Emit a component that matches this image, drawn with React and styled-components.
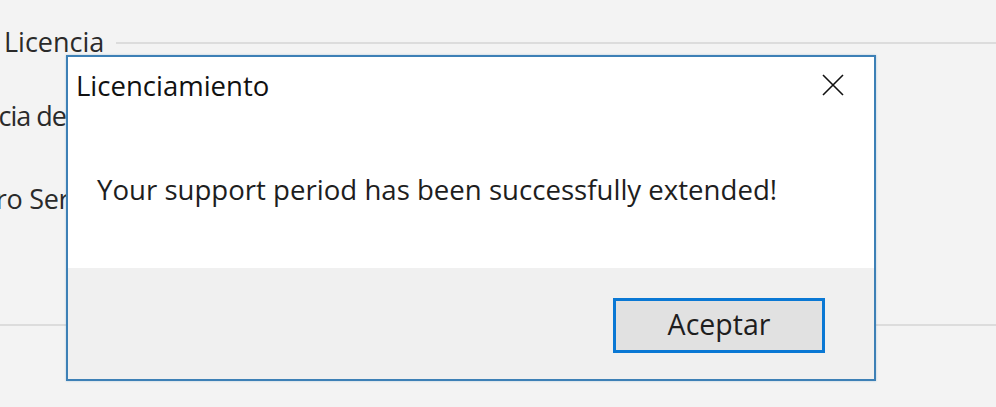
import React from "react";
import styled, { createGlobalStyle } from "styled-components";

const Global = createGlobalStyle`
  html, body { margin: 0; padding: 0; background: #f3f3f3; }
  #root { width: 996px; height: 407px; }
`;

const Page = styled.div`
  position: relative;
  width: 996px;
  height: 407px;
  overflow: hidden;
  background: #f3f3f3;
  font-family: "Open Sans", "Noto Sans", sans-serif;
  color: #2a2a2a;
`;

const Backdrop = styled.div`
  display: flex;
  flex-direction: column;
  padding-top: 25px;
`;

const GroupHeader = styled.div`
  display: flex;
  align-items: center;
  gap: 12px;
  padding-left: 4px;
  font-size: 27px;
  line-height: 34px;
`;

const GroupRule = styled.div`
  flex: 1;
  height: 2px;
  background: #dcdcdc;
  margin-top: 1px;
`;

const FieldRow = styled.div`
  font-size: 27px;
  line-height: 34px;
  white-space: nowrap;
  letter-spacing: ${(p) => p.$track}px;
  margin-left: ${(p) => p.$shift}px;
  margin-top: ${(p) => p.$gap}px;
`;

const BottomRule = styled.div`
  height: 2px;
  background: #dcdcdc;
  margin-top: 108px;
`;

const Dialog = styled.div`
  position: absolute;
  left: 66px;
  top: 55px;
  width: 806px;
  height: 322px;
  border: 2px solid #3d80b6;
  background: #ffffff;
  display: flex;
  flex-direction: column;
  box-shadow: 0 0 2px rgba(60, 128, 182, 0.35);
`;

const TitleBar = styled.div`
  display: flex;
  align-items: center;
  justify-content: space-between;
  height: 56px;
  padding: 0 30px 0 8px;
`;

const Title = styled.div`
  font-size: 27.5px;
  color: #111;
`;

const Close = styled.div`
  width: 22px;
  height: 22px;
  display: flex;
  align-items: center;
  justify-content: center;
`;

const Body = styled.div`
  flex: 0 0 155px;
  display: flex;
  align-items: center;
  padding-left: 29px;
  padding-bottom: 4px;
  box-sizing: border-box;
`;

const Message = styled.div`
  font-size: 27.6px;
  color: #1e1e1e;
`;

const Footer = styled.div`
  flex: 1;
  background: #f0f0f0;
  display: flex;
  justify-content: flex-end;
  align-items: flex-start;
  padding: 30px 49px 0 0;
`;

const Button = styled.button`
  width: 212px;
  height: 55px;
  box-sizing: border-box;
  border: 3px solid #0a78d4;
  background: #e1e1e1;
  font-family: inherit;
  font-size: 28.5px;
  line-height: 1;
  color: #1e1e1e;
  padding: 0 0 3px 0;
  cursor: default;
`;

export default function App() {
  return (
    <>
      <Global />
      <Page>
        <Backdrop>
          <GroupHeader>
            <span>Licencia</span>
            <GroupRule />
          </GroupHeader>
          <FieldRow $shift={-62} $gap={40} $track={-1}>Licencia de uso</FieldRow>
          <FieldRow $shift={-80} $gap={49} $track={-0.3}>Número Serie</FieldRow>
          <BottomRule />
        </Backdrop>
        <Dialog>
          <TitleBar>
            <Title>Licenciamiento</Title>
            <Close>
              <svg width="22" height="22" viewBox="0 0 22 22">
                <path d="M1 1 L21 21 M21 1 L1 21" stroke="#111" strokeWidth="1.6" fill="none" />
              </svg>
            </Close>
          </TitleBar>
          <Body>
            <Message>Your support period has been successfully extended!</Message>
          </Body>
          <Footer>
            <Button>Aceptar</Button>
          </Footer>
        </Dialog>
      </Page>
    </>
  );
}
